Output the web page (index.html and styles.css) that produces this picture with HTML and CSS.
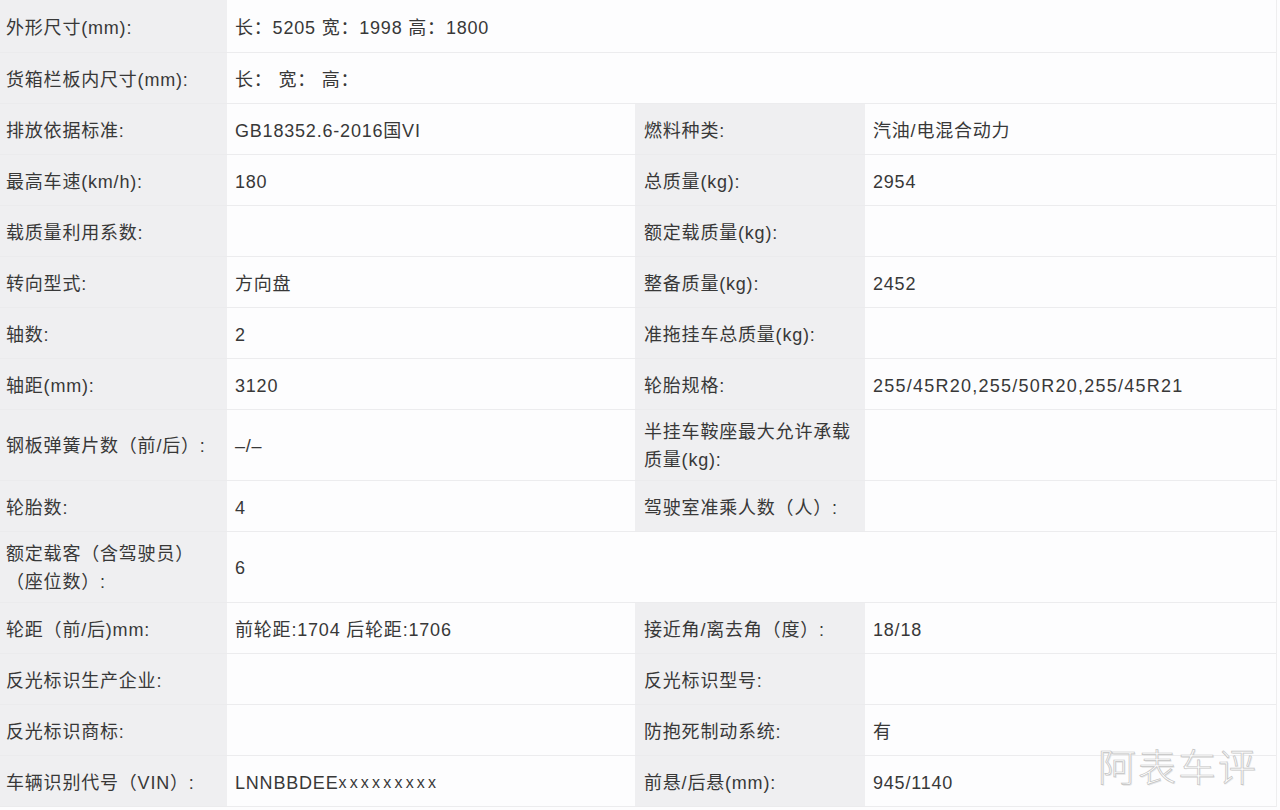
FILE: index.html
```html
<!DOCTYPE html>
<html lang="zh-CN">
<head>
<meta charset="utf-8">
<title>车辆参数</title>
<link rel="stylesheet" href="styles.css">
</head>
<body>
<div class="sheet">
  <div class="spec">
    <div class="cell label first">外形尺寸(mm):</div>
    <div class="cell value wide first">长：5205 宽：1998 高：1800</div>

    <div class="cell label">货箱栏板内尺寸(mm):</div>
    <div class="cell value wide">长：&nbsp;宽：&nbsp;高：</div>

    <div class="cell label">排放依据标准:</div>
    <div class="cell value">GB18352.6-2016国VI</div>
    <div class="cell label right">燃料种类:</div>
    <div class="cell value">汽油/电混合动力</div>

    <div class="cell label">最高车速(km/h):</div>
    <div class="cell value">180</div>
    <div class="cell label right">总质量(kg):</div>
    <div class="cell value">2954</div>

    <div class="cell label">载质量利用系数:</div>
    <div class="cell value"></div>
    <div class="cell label right">额定载质量(kg):</div>
    <div class="cell value"></div>

    <div class="cell label">转向型式:</div>
    <div class="cell value">方向盘</div>
    <div class="cell label right">整备质量(kg):</div>
    <div class="cell value">2452</div>

    <div class="cell label">轴数:</div>
    <div class="cell value">2</div>
    <div class="cell label right">准拖挂车总质量(kg):</div>
    <div class="cell value"></div>

    <div class="cell label">轴距(mm):</div>
    <div class="cell value">3120</div>
    <div class="cell label right">轮胎规格:</div>
    <div class="cell value tyre">255/45R20,255/50R20,255/45R21</div>

    <div class="cell label tall">钢板弹簧片数（前/后）:</div>
    <div class="cell value tall">–/–</div>
    <div class="cell label right tall">半挂车鞍座最大允许承载质量(kg):</div>
    <div class="cell value tall"></div>

    <div class="cell label">轮胎数:</div>
    <div class="cell value">4</div>
    <div class="cell label right">驾驶室准乘人数（人）:</div>
    <div class="cell value"></div>

    <div class="cell label tall">额定载客（含驾驶员）（座位数）:</div>
    <div class="cell value wide tall">6</div>

    <div class="cell label">轮距（前/后)mm:</div>
    <div class="cell value">前轮距:1704 后轮距:1706</div>
    <div class="cell label right">接近角/离去角（度）:</div>
    <div class="cell value">18/18</div>

    <div class="cell label">反光标识生产企业:</div>
    <div class="cell value"></div>
    <div class="cell label right">反光标识型号:</div>
    <div class="cell value"></div>

    <div class="cell label">反光标识商标:</div>
    <div class="cell value"></div>
    <div class="cell label right">防抱死制动系统:</div>
    <div class="cell value">有</div>

    <div class="cell label">车辆识别代号（VIN）:</div>
    <div class="cell value">LNNBBDEE<span class="mask">xxxxxxxxx</span></div>
    <div class="cell label right">前悬/后悬(mm):</div>
    <div class="cell value">945/1140</div>
  </div>
  <div class="watermark">阿表车评</div>
</div>
</body>
</html>
```

FILE: styles.css
```css
html, body {
  margin: 0;
  padding: 0;
  background: #fdfdfe;
}

body {
  width: 1280px;
  height: 810px;
  overflow: hidden;
  font-family: "Liberation Sans", "Noto Sans CJK SC", sans-serif;
  font-size: 18px;
  letter-spacing: 0.8px;
  color: #383838;
}

.sheet {
  position: relative;
  width: 1280px;
  height: 810px;
}

.spec {
  display: grid;
  grid-template-columns: 227px 408px 230px 411px;
  border-right: 1px solid #eeeeef;
  width: 1276px;
}

.cell {
  display: flex;
  align-items: center;
  min-height: 51px;
  box-sizing: border-box;
  border-bottom: 1px solid #ececee;
  line-height: 28px;
  padding: 3px 6px 0 8px;
}

.label {
  background: #efeff1;
  border-bottom-color: #ebebed;
  padding-left: 6px;
}

.label.right {
  padding-left: 9px;
}

.value {
  background: #fdfdfe;
  padding-left: 8px;
}

.tyre {
  letter-spacing: 1.25px;
}

.wide {
  grid-column: span 3;
}

.first {
  min-height: 53px;
  padding-top: 4px;
}

.tall {
  min-height: 71px;
  padding-top: 8px;
  padding-bottom: 6px;
}

.mask {
  font-size: 16px;
  letter-spacing: 3.2px;
}

.watermark {
  position: absolute;
  right: 22px;
  bottom: 25px;
  font-family: "Noto Sans CJK SC", sans-serif;
  font-weight: 300;
  font-size: 38px;
  letter-spacing: 2px;
  line-height: 40px;
  color: #ffffff;
  -webkit-text-stroke: 0.7px #c2c2c2;
  text-shadow: 1px 1px 0 #e6e6e6;
}
```
